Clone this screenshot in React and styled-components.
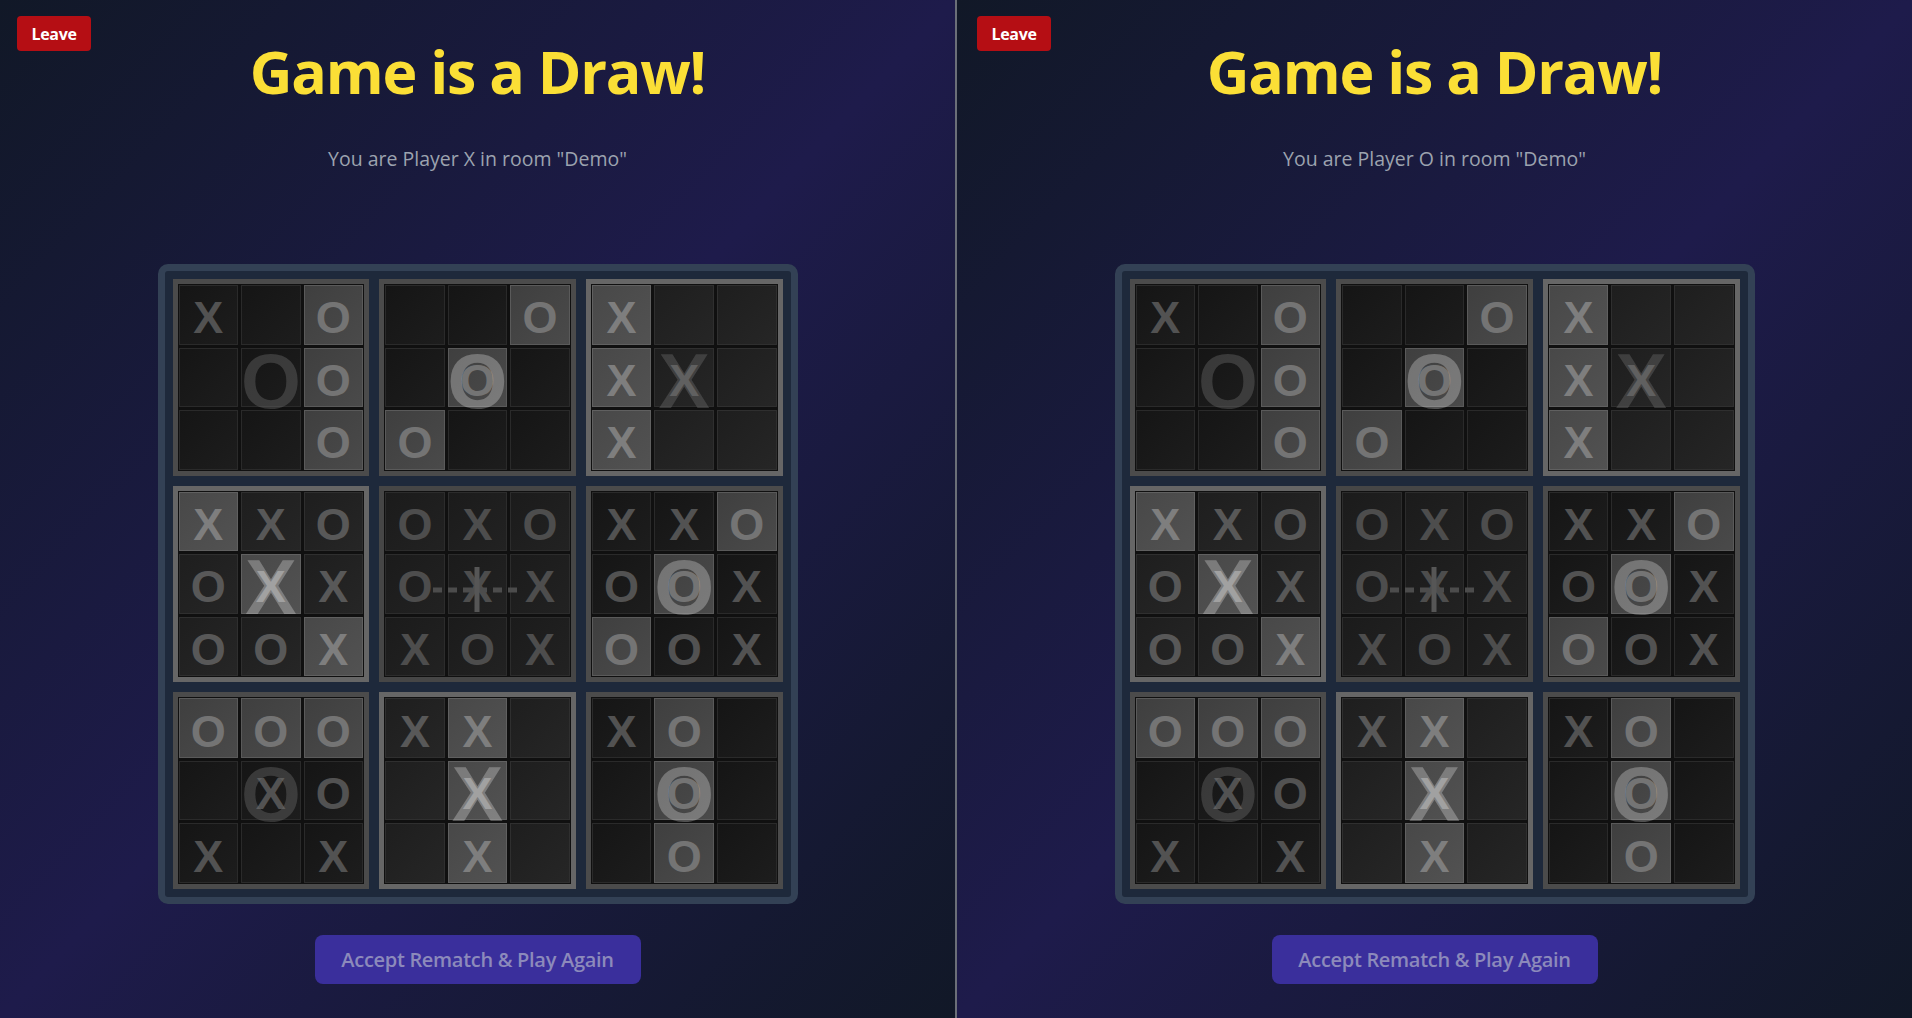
import React from 'react'
import styled, { createGlobalStyle } from 'styled-components'

const GlobalStyle = createGlobalStyle`
    html, body {
        margin: 0;
        padding: 0;
        background: #111827;
        overflow: hidden;
    }
    * {
        box-sizing: border-box;
    }
`

// winner per small board: X, O or D (draw); hl = winning cells
const boards = [
    { win: 'O', cells: 'X.O..O..O', hl: [2, 5, 8] },
    { win: 'O', cells: '..O.O.O..', hl: [2, 4, 6] },
    { win: 'X', cells: 'X..XX.X..', hl: [0, 3, 6] },
    { win: 'X', cells: 'XXOOXXOOX', hl: [0, 4, 8] },
    { win: 'D', cells: 'OXOOXXXOX', hl: [] },
    { win: 'O', cells: 'XXOOOXOOX', hl: [2, 4, 6] },
    { win: 'O', cells: 'OOO.XOX.X', hl: [0, 1, 2] },
    { win: 'X', cells: 'XX..X..X.', hl: [1, 4, 7] },
    { win: 'O', cells: 'XO..O..O.', hl: [1, 4, 7] },
]

const tones = {
    X: {
        border: '#666666',
        bg: 'linear-gradient(135deg, #1e1e1e, #262626)',
        line: '#2f2f2f',
        hlBg: 'linear-gradient(135deg, #484848, #525252)',
        hlLine: '#606060',
        mark: '#585858',
        hlMark: '#7e7e7e',
    },
    O: {
        border: '#4b4b4b',
        bg: 'linear-gradient(135deg, #151515, #1d1d1d)',
        line: '#2a2a2a',
        hlBg: 'linear-gradient(135deg, #3f3f3f, #4a4a4a)',
        hlLine: '#5a5a5a',
        mark: '#525252',
        hlMark: '#747474',
    },
    D: {
        border: '#464646',
        bg: 'linear-gradient(135deg, #1b1b1b, #222222)',
        line: '#2c2c2c',
        hlBg: '#1e1e1e',
        hlLine: '#2c2c2c',
        mark: '#4d4d4d',
        hlMark: '#4d4d4d',
    },
}

function App() {
    return (
        <>
            <GlobalStyle />
            <Page>
                <GameView player="X" inset={17} />
                <Divider />
                <GameView player="O" inset={20} />
            </Page>
        </>
    )
}

export default App

function GameView({ player, inset }) {
    return (
        <Panel>
            <LeaveButton $inset={inset}>Leave</LeaveButton>
            <Title>Game is a Draw!</Title>
            <SubTitle>You are Player {player} in room "Demo"</SubTitle>
            <Board>
                {boards.map((b, i) => (
                    <SmallBoard key={i} board={b} />
                ))}
            </Board>
            <RematchButton>Accept Rematch &amp; Play Again</RematchButton>
        </Panel>
    )
}

function SmallBoard({ board }) {
    const tone = tones[board.win]
    const lit = board.hl.includes(4)
    return (
        <Sub $border={tone.border}>
            {board.cells.split('').map((c, i) => {
                const on = board.hl.includes(i)
                return (
                    <Cell
                        key={i}
                        $bg={on ? tone.hlBg : tone.bg}
                        $line={on ? tone.hlLine : tone.line}
                        $color={on ? tone.hlMark : tone.mark}
                    >
                        {c === '.' ? '' : c}
                    </Cell>
                )
            })}
            {board.win === 'D' ? (
                <DrawMark viewBox="0 0 100 60" width="100" height="60">
                    <line x1="6" y1="31" x2="94" y2="31" stroke="#4c4c4c" strokeWidth="5" strokeDasharray="9 6" />
                    <line x1="50" y1="8" x2="50" y2="53" stroke="#565656" strokeWidth="5" />
                </DrawMark>
            ) : (
                <BigMark $lit={lit}>{board.win}</BigMark>
            )}
        </Sub>
    )
}

const Page = styled.div`
    display: flex;
    width: 1912px;
    height: 1018px;
`

const Panel = styled.div`
    position: relative;
    flex: 0 0 955px;
    height: 1018px;
    display: flex;
    flex-direction: column;
    align-items: center;
    background: linear-gradient(to bottom right, #111827, #1e1b4b, #111827);
    font-family: "Open Sans", "Noto Sans", sans-serif;
`

const Divider = styled.div`
    flex: 0 0 2px;
    background: #6b6f78;
`

const LeaveButton = styled.button`
    position: absolute;
    top: 16px;
    left: ${(p) => p.$inset}px;
    width: 74px;
    height: 35px;
    padding: 0;
    border: none;
    border-radius: 4px;
    background: #b50e14;
    color: #ffffff;
    font-family: "Open Sans", sans-serif;
    font-size: 16px;
    font-weight: 700;
    letter-spacing: -0.3px;
    cursor: pointer;
`

const Title = styled.h1`
    margin: 41px 0 0;
    font-size: 59px;
    line-height: 60px;
    font-weight: 700;
    letter-spacing: -1.2px;
    color: #fbdf36;
`

const SubTitle = styled.div`
    margin-top: 44px;
    font-size: 19.5px;
    line-height: 28px;
    color: #9ca3af;
`

const Board = styled.div`
    margin-top: 91px;
    width: 640px;
    height: 640px;
    padding: 8px;
    border: 7px solid #334155;
    border-radius: 10px;
    background: #1e293b;
    display: grid;
    grid-template-columns: repeat(3, 1fr);
    grid-template-rows: repeat(3, 1fr);
    gap: 10px;
`

const Sub = styled.div`
    position: relative;
    display: grid;
    grid-template-columns: repeat(3, 1fr);
    grid-template-rows: repeat(3, 1fr);
    gap: 3px;
    padding: 1px;
    border: 5px solid ${(p) => p.$border};
    background: #101010;
`

const Cell = styled.div`
    display: flex;
    align-items: center;
    justify-content: center;
    padding-top: 6px;
    border: 1px solid ${(p) => p.$line};
    background: ${(p) => p.$bg};
    color: ${(p) => p.$color};
    font-family: "Liberation Sans", Arial, sans-serif;
    font-weight: 700;
    font-size: 45px;
    line-height: 1;
`

const BigMark = styled.div`
    position: absolute;
    inset: 0;
    display: flex;
    align-items: center;
    justify-content: center;
    padding-top: 8px;
    font-family: "Liberation Sans", Arial, sans-serif;
    font-weight: 700;
    font-size: 77px;
    line-height: 1;
    color: ${(p) => (p.$lit ? 'rgba(255, 255, 255, 0.27)' : 'rgba(110, 110, 110, 0.4)')};
    pointer-events: none;
`

const DrawMark = styled.svg`
    position: absolute;
    left: 50%;
    top: 50%;
    margin-left: -50px;
    margin-top: -25px;
    pointer-events: none;
`

const RematchButton = styled.button`
    margin-top: 31px;
    width: 326px;
    height: 49px;
    padding: 0;
    border: none;
    border-radius: 8px;
    background: #3a2f9c;
    color: #8c8abb;
    font-family: "Open Sans", sans-serif;
    font-size: 20px;
    font-weight: 600;
    letter-spacing: -0.3px;
    cursor: pointer;
`
